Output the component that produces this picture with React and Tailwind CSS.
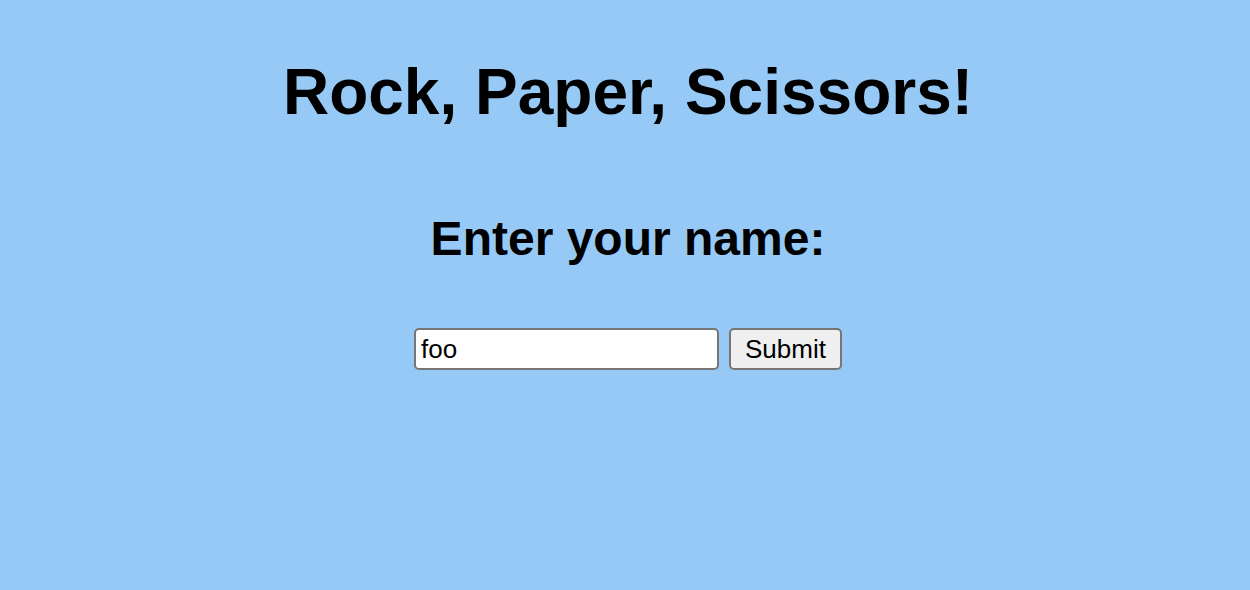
export default function App() {
    return (
        <div className="min-h-screen bg-[#96c9f5] pl-[6px] flex flex-col items-center text-black font-['Liberation_Sans',Arial,sans-serif]">
            <h1 className="mt-[55px] text-[64px] leading-[74px] font-bold">Rock, Paper, Scissors!</h1>

            <h2 className="mt-[82px] text-[48px] leading-[55px] font-bold">Enter your name:</h2>

            <form className="mt-[62px] flex items-center gap-[10px]" onSubmit={(e) => e.preventDefault()}>
                <input
                    type="text"
                    defaultValue="foo"
                    className="w-[305px] h-[42px] px-[5px] text-[26px] bg-white border-2 border-[#767676] rounded-[5px] outline-none"
                />
                <button
                    type="submit"
                    className="w-[113px] h-[42px] text-[26px] bg-[#efefef] border-2 border-[#767676] rounded-[5px]"
                >
                    Submit
                </button>
            </form>
        </div>
    );
}
